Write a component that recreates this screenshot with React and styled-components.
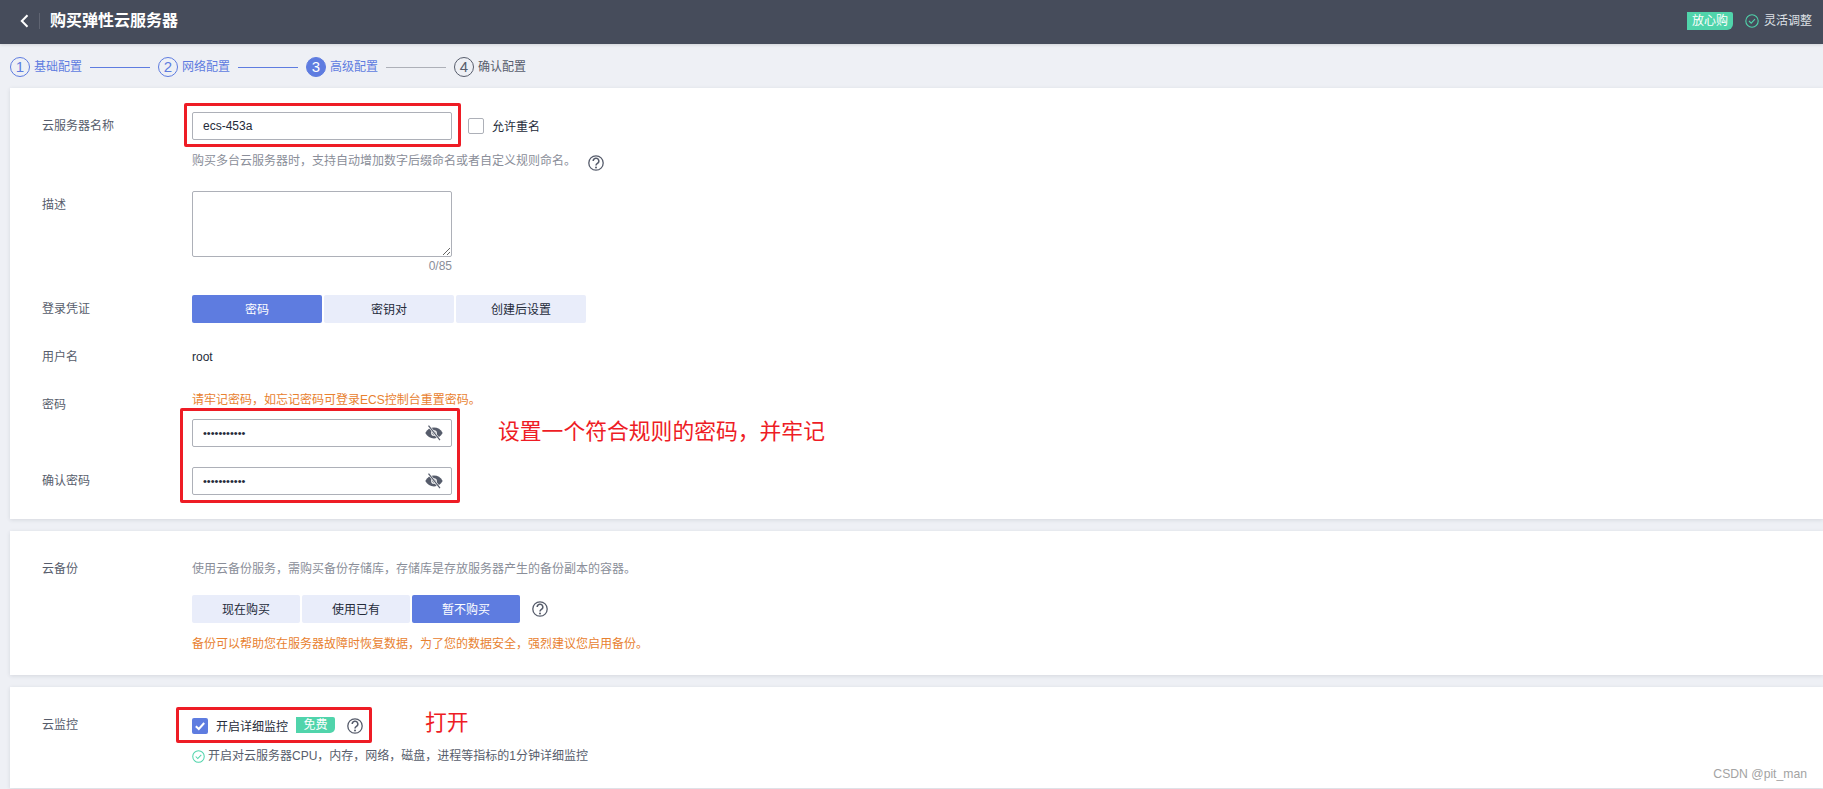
import React from "react";
import styled, { createGlobalStyle } from "styled-components";

const Global = createGlobalStyle`
  html, body { margin: 0; padding: 0; height: 789px; overflow: hidden; background: #eef0f5; }
  body { font-family: "Liberation Sans", "Noto Sans CJK SC", sans-serif; font-size: 12px; color: #575d6c; }
  * { box-sizing: border-box; }
`;

const Page = styled.div`
  width: 1823px;
  height: 789px;
  overflow: hidden;
`;
const Header = styled.header`
  height: 44px;
  background: #464c5b;
  display: flex;
  align-items: center;
  padding: 0 11px 3px 20px;
  color: #fff;
  box-shadow: 0 1px 3px rgba(0, 0, 0, 0.12);
`;
const BackIcon = styled.svg`
  width: 9px;
  height: 14px;
  display: block;
`;
const HeaderDivider = styled.span`
  width: 1px;
  height: 16px;
  background: #5f6472;
  margin: 0 10px 0 10px;
`;
const Title = styled.h1`
  margin: 0;
  font-size: 16px;
  line-height: 24px;
  font-weight: 700;
`;
const HeaderRight = styled.div`
  margin-left: auto;
  display: flex;
  align-items: center;
`;
const TrustBadge = styled.span`
  width: 46px;
  height: 18px;
  background: #50d4ab;
  color: #fff;
  border-radius: 0 2px 6px 0;
  font-size: 12px;
  line-height: 18px;
  text-align: center;
`;
const FlexNote = styled.span`
  display: flex;
  align-items: center;
  gap: 5px;
  margin-left: 12px;
  color: #dfe1e6;
  font-size: 12px;
  line-height: 18px;
`;

const Stepper = styled.nav`
  height: 44px;
  padding: 2px 0 0 10px;
  display: flex;
  align-items: center;
`;
const StepCircle = styled.span`
  width: 20px;
  height: 20px;
  border-radius: 50%;
  border: 1px solid ${(p) => (p.$state === "todo" ? "#575d6c" : "#5e7ce0")};
  background: ${(p) => (p.$state === "active" ? "#5e7ce0" : "transparent")};
  color: ${(p) => (p.$state === "active" ? "#fff" : p.$state === "todo" ? "#575d6c" : "#5e7ce0")};
  font-size: 15px;
  line-height: 18px;
  text-align: center;
`;
const StepLabel = styled.span`
  margin-left: 4px;
  width: 48px;
  font-size: 12px;
  line-height: 18px;
  color: ${(p) => (p.$state === "todo" ? "#575d6c" : "#5e7ce0")};
`;
const StepLine = styled.span`
  width: 60px;
  height: 1px;
  margin: 0 8px;
  background: ${(p) => (p.$done ? "#5e7ce0" : "#adb0b8")};
`;

const Card = styled.section`
  position: relative;
  margin: 0 0 12px 10px;
  padding: 24px 0 ${(p) => p.$bottom}px 32px;
  background: #fff;
  box-shadow: 0 1px 4px rgba(37, 43, 58, 0.12);
`;
const Row = styled.div`
  display: grid;
  grid-template-columns: 150px 1fr;
  margin-top: ${(p) => p.$top || 0}px;
`;
const Label = styled.div`
  font-size: 12px;
  line-height: 28px;
  color: #575d6c;
`;
const Field = styled.div`
  display: flex;
  flex-direction: column;
  align-items: flex-start;
`;
const InputLine = styled.div`
  display: flex;
  align-items: center;
  margin-top: ${(p) => p.$top || 0}px;
`;
const TextInput = styled.input`
  width: 260px;
  height: 28px;
  padding: 0 10px;
  border: 1px solid #adb0b8;
  border-radius: 2px;
  font: 12px "Liberation Sans", sans-serif;
  color: #252b3a;
  outline: none;
`;
const PasswordBox = styled.div`
  position: relative;
  width: 260px;
  height: 28px;
  margin-top: ${(p) => p.$top || 0}px;
`;
const PasswordInput = styled(TextInput)`
  font-size: 11px;
  padding-right: 36px;
`;
const EyeIcon = styled.svg`
  position: absolute;
  top: 6px;
  right: 9px;
  width: 18px;
  height: 16px;
`;
const CheckBoxEmpty = styled.span`
  width: 16px;
  height: 16px;
  margin-left: 16px;
  border: 1px solid #adb0b8;
  border-radius: 2px;
  background: #fff;
`;
const CheckLabel = styled.span`
  margin-left: 8px;
  margin-top: ${(p) => p.$shift || 0}px;
  font-size: 12px;
  color: #252b3a;
`;
const HintLine = styled.div`
  display: flex;
  align-items: center;
  margin-top: ${(p) => p.$top || 0}px;
  line-height: 18px;
  font-size: 12px;
  color: #8a8e99;
`;
const HelpIcon = styled.svg`
  width: 16px;
  height: 16px;
  margin-left: ${(p) => p.$left}px;
  margin-top: ${(p) => p.$shift || 0}px;
  flex: none;
`;
const TextArea = styled.textarea`
  display: block;
  width: 260px;
  height: 66px;
  border: 1px solid #adb0b8;
  border-radius: 2px;
  outline: none;
  padding: 5px 10px;
  margin: 0;
`;
const Counter = styled.div`
  width: 260px;
  text-align: right;
  font-size: 12px;
  line-height: 18px;
  color: #8a8e99;
`;
const Segments = styled.div`
  display: flex;
  align-items: center;
  gap: 2px;
  margin-top: ${(p) => p.$top || 0}px;
`;
const Segment = styled.button`
  width: ${(p) => p.$w}px;
  height: 28px;
  border: 0;
  padding: 0 0 2px;
  border-radius: 2px;
  font: 12px "Liberation Sans", "Noto Sans CJK SC", sans-serif;
  background: ${(p) => (p.$on ? "#5e7ce0" : "#e9edfa")};
  color: ${(p) => (p.$on ? "#fff" : "#252b3a")};
`;
const Value = styled.div`
  font-size: 12px;
  line-height: 28px;
  color: #252b3a;
`;
const Warning = styled.div`
  margin-top: ${(p) => p.$top || 0}px;
  font-size: 12px;
  line-height: 18px;
  color: #e8812f;
`;
const Description = styled.div`
  font-size: 12px;
  line-height: 28px;
  color: #8a8e99;
`;
const MonitorLine = styled.div`
  display: flex;
  align-items: center;
  height: 28px;
`;
const BlueCheck = styled.span`
  width: 16px;
  height: 16px;
  border-radius: 2px;
  background: #5e7ce0;
  display: flex;
  align-items: center;
  justify-content: center;
  margin-top: 2px;
`;
const FreeBadge = styled.span`
  width: 39px;
  height: 16px;
  margin-left: 8px;
  border-radius: 0 2px 5px 0;
  background: #50d4ab;
  color: #fff;
  font-size: 12px;
  line-height: 16px;
  text-align: center;
`;
const MonitorNote = styled.div`
  display: flex;
  align-items: center;
  gap: 3px;
  margin-top: 8px;
  font-size: 12px;
  line-height: 18px;
  color: #575d6c;
`;
const RedBox = styled.div`
  position: absolute;
  left: ${(p) => p.$x}px;
  top: ${(p) => p.$y}px;
  width: ${(p) => p.$w}px;
  height: ${(p) => p.$h}px;
  border: 3px solid #ee1c25;
  border-radius: 2px;
  pointer-events: none;
`;
const Annotation = styled.div`
  position: absolute;
  left: ${(p) => p.$x}px;
  top: ${(p) => p.$y}px;
  font-size: 21.8px;
  line-height: 30px;
  color: #ee1c25;
  white-space: nowrap;
`;
const Watermark = styled.div`
  position: absolute;
  right: 16px;
  bottom: 5px;
  font-family: "Liberation Sans", sans-serif;
  font-size: 12.2px;
  line-height: 18px;
  color: #a3a3a3;
`;

const Help = (props) => (
  <HelpIcon viewBox="0 0 16 16" fill="none" {...props}>
    <circle cx="8" cy="8" r="7.2" stroke="#575d6c" strokeWidth="1.3" />
    <path d="M5.2 6a2.8 2.8 0 1 1 4.2 2.4c-.9.55-1.4 1-1.4 2.1" stroke="#575d6c" strokeWidth="1.5" />
    <circle cx="8" cy="12.4" r="1" fill="#575d6c" />
  </HelpIcon>
);

const Eye = () => (
  <EyeIcon viewBox="0 0 18 16">
    <path d="M.3 8C2.2 4.4 5.4 2.6 9 2.6s6.8 1.8 8.7 5.4c-1.9 3.6-5.1 5.4-8.7 5.4S2.200 11.600.3 8Z" fill="#565c6b" />
    <circle cx="9" cy="8" r="2.300" fill="none" stroke="#fff" strokeWidth="1.100" />
    <path d="M3.500.6 15 15.200" stroke="#fff" strokeWidth="2.400" />
    <path d="M3.500.6 15 15.200" stroke="#565c6b" strokeWidth="1.200" />
  </EyeIcon>
);

const RoundCheck = ({ size, color }) => (
  <svg width={size} height={size} viewBox="0 0 14 14" fill="none">
    <circle cx="7" cy="7" r="6.2" stroke={color} strokeWidth="1.1" />
    <path d="M4 7l2.2 2.2L10 5.2" stroke={color} strokeWidth="1.1" />
  </svg>
);

const steps = [
  { n: 1, label: "基础配置", state: "done" },
  { n: 2, label: "网络配置", state: "done" },
  { n: 3, label: "高级配置", state: "active" },
  { n: 4, label: "确认配置", state: "todo" },
];

export default function App() {
  return (
    <Page lang="zh-CN">
      <Global />
      <Header>
        <BackIcon viewBox="0 0 9 14" fill="none">
          <path d="M7.5 1.2 1.800 7l5.700 5.800" stroke="#fff" strokeWidth="2" />
        </BackIcon>
        <HeaderDivider />
        <Title>购买弹性云服务器</Title>
        <HeaderRight>
          <TrustBadge>放心购</TrustBadge>
          <FlexNote>
            <RoundCheck size={14} color="#50d4ab" />
            灵活调整
          </FlexNote>
        </HeaderRight>
      </Header>

      <Stepper>
        {steps.map((s, i) => (
          <React.Fragment key={s.n}>
            <StepCircle $state={s.state}>{s.n}</StepCircle>
            <StepLabel $state={s.state}>{s.label}</StepLabel>
            {i < 3 && <StepLine $done={i < 2} />}
          </React.Fragment>
        ))}
      </Stepper>

      <Card $bottom={24}>
        <Row>
          <Label>云服务器名称</Label>
          <Field>
            <InputLine>
              <TextInput defaultValue="ecs-453a" readOnly />
              <CheckBoxEmpty />
              <CheckLabel $shift={-2}>允许重名</CheckLabel>
            </InputLine>
            <HintLine $top={11}>
              购买多台云服务器时，支持自动增加数字后缀命名或者自定义规则命名。
              <Help $left={12} $shift={4} />
            </HintLine>
          </Field>
        </Row>
        <Row $top={20}>
          <Label>描述</Label>
          <Field>
            <TextArea />
            <Counter>0/85</Counter>
          </Field>
        </Row>
        <Row $top={20}>
          <Label>登录凭证</Label>
          <Segments>
            <Segment $w={130} $on>密码</Segment>
            <Segment $w={130}>密钥对</Segment>
            <Segment $w={130}>创建后设置</Segment>
          </Segments>
        </Row>
        <Row $top={20}>
          <Label>用户名</Label>
          <Value>root</Value>
        </Row>
        <Row $top={20}>
          <Label>密码</Label>
          <Field>
            <Warning>请牢记密码，如忘记密码可登录ECS控制台重置密码。</Warning>
            <PasswordBox $top={10}>
              <PasswordInput type="password" defaultValue="12345678901" readOnly />
              <Eye />
            </PasswordBox>
          </Field>
        </Row>
        <Row $top={20}>
          <Label>确认密码</Label>
          <PasswordBox>
            <PasswordInput type="password" defaultValue="12345678901" readOnly />
            <Eye />
          </PasswordBox>
        </Row>
        <RedBox $x={174} $y={15} $w={277} $h={44} />
        <RedBox $x={170} $y={320} $w={280} $h={95} />
        <Annotation $x={488} $y={329}>设置一个符合规则的密码，并牢记</Annotation>
      </Card>

      <Card $bottom={22}>
        <Row>
          <Label>云备份</Label>
          <Field>
            <Description>使用云备份服务，需购买备份存储库，存储库是存放服务器产生的备份副本的容器。</Description>
            <Segments $top={12}>
              <Segment $w={108}>现在购买</Segment>
              <Segment $w={108}>使用已有</Segment>
              <Segment $w={108} $on>暂不购买</Segment>
              <Help $left={10} />
            </Segments>
            <Warning $top={12}>备份可以帮助您在服务器故障时恢复数据，为了您的数据安全，强烈建议您启用备份。</Warning>
          </Field>
        </Row>
      </Card>

      <Card $bottom={23}>
        <Row>
          <Label>云监控</Label>
          <Field>
            <MonitorLine>
              <BlueCheck>
                <svg width="12" height="12" viewBox="0 0 12 12" fill="none">
                  <path d="M1.800 6.200 4.800 9 10.200 3" stroke="#fff" strokeWidth="2" />
                </svg>
              </BlueCheck>
              <CheckLabel>开启详细监控</CheckLabel>
              <FreeBadge>免费</FreeBadge>
              <Help $left={12} $shift={2} />
            </MonitorLine>
            <MonitorNote>
              <RoundCheck size={13} color="#50d4ab" />
              开启对云服务器CPU，内存，网络，磁盘，进程等指标的1分钟详细监控
            </MonitorNote>
          </Field>
        </Row>
        <RedBox $x={166} $y={20} $w={196} $h={36} />
        <Annotation $x={415} $y={21}>打开</Annotation>
        <Watermark>CSDN @pit_man</Watermark>
      </Card>
    </Page>
  );
}
